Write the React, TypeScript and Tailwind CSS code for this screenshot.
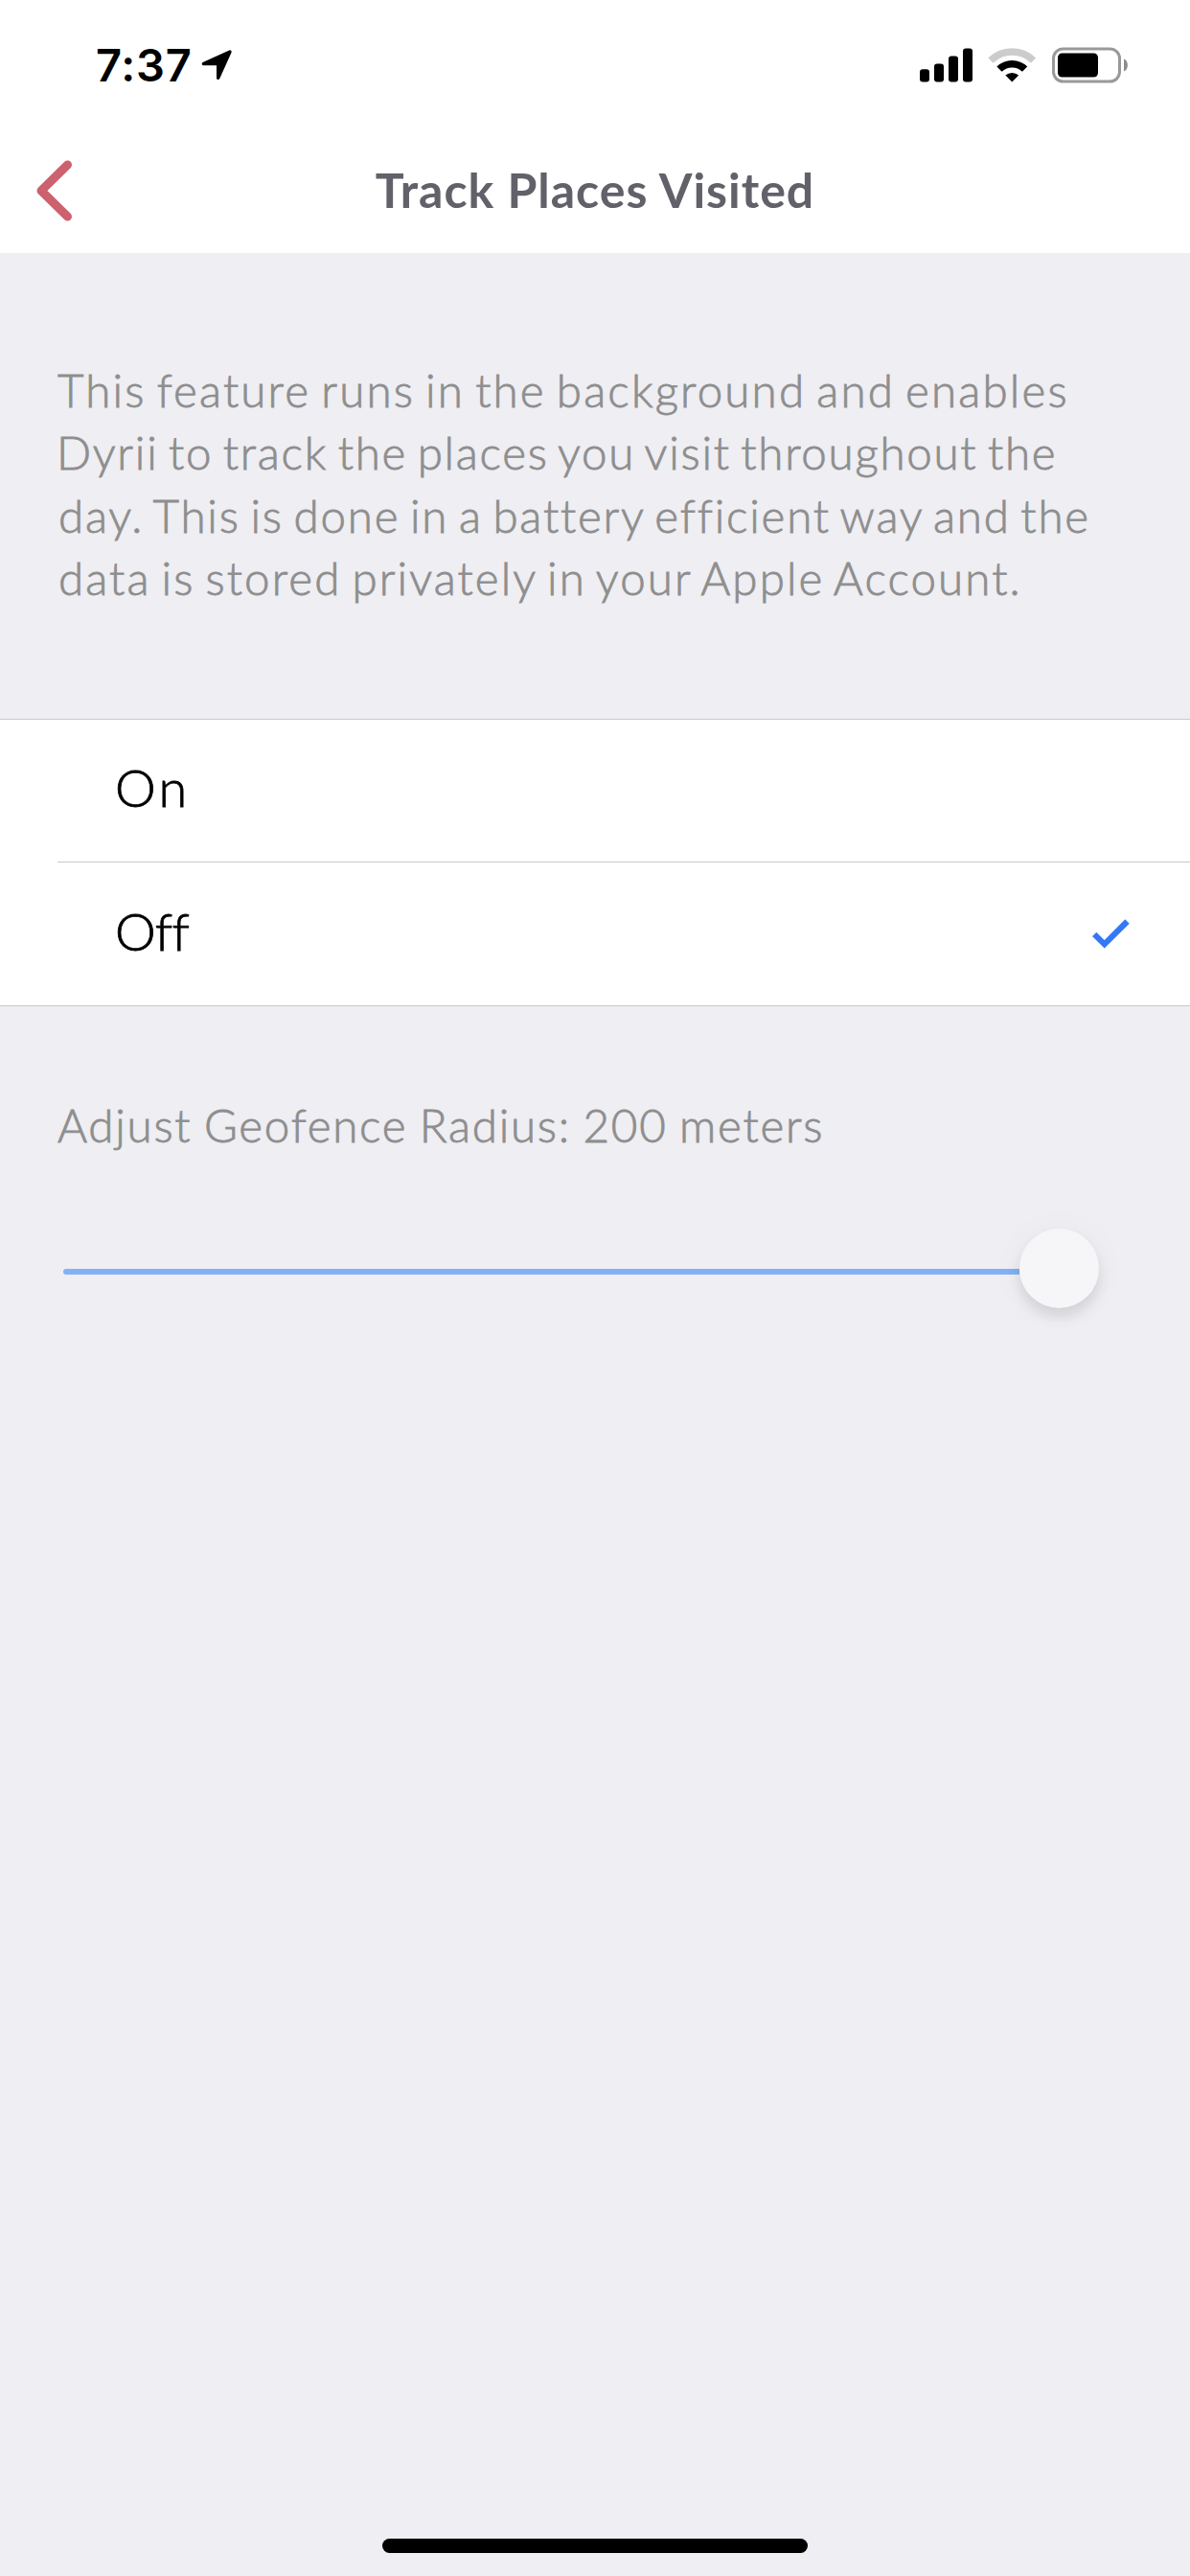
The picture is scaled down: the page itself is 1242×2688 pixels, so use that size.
const description = [
  { text: "This feature runs in the background and enables", className: "-ml-px tracking-[2.16px]" },
  { text: "Dyrii to track the places you visit throughout the", className: "-ml-0.5 tracking-[1.73px]" },
  { text: "day. This is done in a battery efficient way and the", className: "tracking-[1.8px]" },
  { text: "data is stored privately in your Apple Account.", className: "tracking-[2.1px]" },
];

function StatusBar() {
  return (
    <div className="flex h-[135px] items-center justify-between pl-[100px] pr-[64px]">
      <div className="flex items-center">
        <span className="w-[109px] whitespace-nowrap font-['Inter',sans-serif] text-[47px] font-semibold leading-none tracking-[0.8px] text-black">
          7:37
        </span>
        <svg width="34" height="34" viewBox="208 51 34 34" fill="#000" stroke="#000" strokeWidth="3.4" strokeLinejoin="round">
          <path d="M239 54L211.4 66.5H226.7V81.4Z" />
        </svg>
      </div>
      <div className="flex items-center">
        <svg width="55" height="36" viewBox="960 49.5 55 36">
          <rect x="960" y="71.7" width="10" height="13.3" rx="3" />
          <rect x="975" y="66" width="10" height="19" rx="3" />
          <rect x="990" y="58" width="10" height="27" rx="3" />
          <rect x="1005" y="50" width="10" height="35" rx="3" />
        </svg>
        <svg className="ml-[15px]" width="52" height="37" viewBox="-26.3 -36.5 52 37" fill="none">
          <path d="M-22.3 -22.3A31.6 31.6 0 0 1 22.3 -22.3" stroke="#ccc" strokeWidth="7.5" />
          <path d="M-13.3 -13.3A18.9 18.9 0 0 1 13.3 -13.3" stroke="#000" strokeWidth="7.5" />
          <path d="M0 0L-6.9 -6.9A10.6 10.6 0 0 1 6.9 -6.9Z" fill="#000" />
        </svg>
        <svg className="ml-4" width="80" height="38" viewBox="1098 48.5 80 38">
          <rect x="1099.5" y="50.5" width="69" height="34" rx="10" fill="none" stroke="#999" strokeWidth="3" />
          <rect x="1104" y="55" width="42" height="25" rx="4.5" />
          <path d="M1173 61C1178.2 63 1178.2 72 1173 74Z" fill="#8c8c8c" />
        </svg>
      </div>
    </div>
  );
}

function NavBar() {
  return (
    <div className="grid h-[129px] grid-cols-[1fr_auto_1fr] items-center pb-0.5">
      <button className="flex pl-9" aria-label="Back">
        <svg width="42" height="66" viewBox="36 165.5 42 66" fill="none" stroke="#cd616e" strokeWidth="9" strokeLinecap="round" strokeLinejoin="round">
          <path d="M70.5 171.5L43 198.5L70.5 225.5" />
        </svg>
      </button>
      <h1 className="whitespace-nowrap pb-0.5 text-[50px] font-bold leading-none tracking-[1px] text-[#62616a]">
        Track Places Visited
      </h1>
    </div>
  );
}

export default function App() {
  return (
    <div className="flex h-[2688px] w-[1242px] flex-col overflow-hidden bg-[#eeeef3] font-['Lato',sans-serif]">
      <header className="bg-white">
        <StatusBar />
        <NavBar />
      </header>

      <p className="flex h-[486px] flex-col pl-[61px] pt-[110px] text-[47.5px] font-light leading-[65.4px] text-[#8e8e8e] [word-spacing:-4px] [-webkit-text-stroke:0.8px_#8e8e8e]">
        {description.map((line) => (
          <span key={line.text} className={`whitespace-nowrap ${line.className}`}>
            {line.text}
          </span>
        ))}
      </p>

      <ul className="border-y border-[#c8c7cc] bg-white text-[54px] font-light leading-none text-black">
        <li className="flex h-[148px] items-center pl-[120px]">
          <span className="pb-1.5 tracking-[3.5px] [-webkit-text-stroke:0.8px_#000]">On</span>
        </li>
        <li className="ml-[60px] flex h-[150px] items-center justify-between border-t border-[#c8c7cc] pl-[60px] pr-[63px]">
          <span className="pb-1.5 tracking-[-0.8px] [-webkit-text-stroke:0.8px_#000]">Off</span>
          <svg width="39" height="31" viewBox="1140 959.3 39 31" fill="#3478f6">
            <path d="M1140 977.3L1144.3 973L1152.7 981.2L1174.3 959.6L1178.7 964L1152.7 989.8Z" />
          </svg>
        </li>
      </ul>

      <section className="flex flex-col pl-[60px] pt-[91px]">
        <label className="h-[141px] whitespace-nowrap text-[47.5px] font-light leading-[66px] tracking-[1.74px] text-[#8e8e8e] [word-spacing:-2px] [-webkit-text-stroke:0.8px_#8e8e8e]">
          Adjust Geofence Radius: 200 meters
        </label>
        <div className="flex h-[83px] items-center pl-1.5">
          <div className="mt-[7px] h-1.5 w-[998px] rounded-l-full bg-[#84b1f3]" />
          <div className="size-[83px] rounded-full bg-[#f6f6f9] shadow-[0_9px_14px_rgba(0,0,0,0.1),0_3px_36px_rgba(0,0,0,0.04)]" />
        </div>
      </section>

      <div className="mx-auto mb-6 mt-auto h-[15px] w-[444px] rounded-full bg-black" />
    </div>
  );
}
